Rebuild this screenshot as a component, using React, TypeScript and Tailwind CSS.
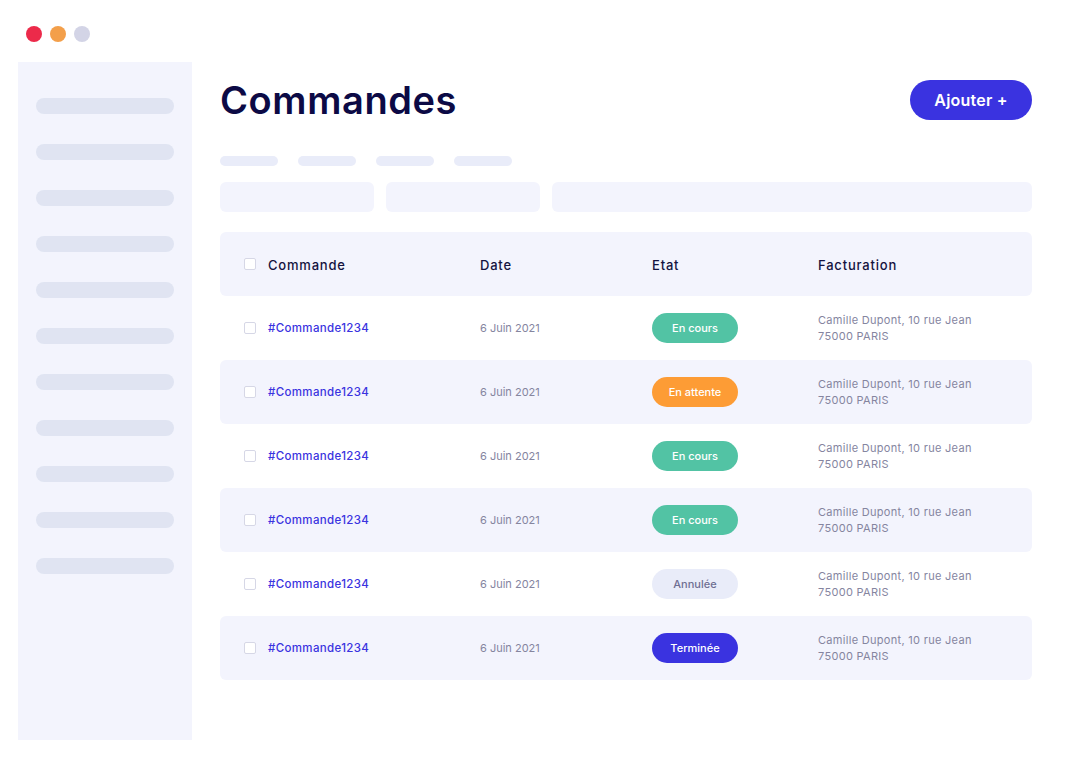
import React from "react";

const rows = [
  { state: "En cours", cls: "bg-[#52c3a4] text-white" },
  { state: "En attente", cls: "bg-[#fd9c35] text-white" },
  { state: "En cours", cls: "bg-[#52c3a4] text-white" },
  { state: "En cours", cls: "bg-[#52c3a4] text-white" },
  { state: "Annulée", cls: "bg-[#e9ecf9] text-[#6f6f93]" },
  { state: "Terminée", cls: "bg-[#3a33e0] text-white" },
];

function Check() {
  return <div className="w-3 h-3 border border-[#d6d7e6] rounded-[2px] bg-white shrink-0" />;
}

export default function App() {
  return (
    <div
      className="w-[1080px] h-[760px] bg-white relative overflow-hidden"
      style={{ fontFamily: "Inter, 'Noto Sans', sans-serif" }}
    >
      <div className="flex gap-2 pl-[26px] pt-[26px] h-[62px]">
        <div className="w-4 h-4 rounded-full bg-[#ec2a4a]" />
        <div className="w-4 h-4 rounded-full bg-[#f39f4a]" />
        <div className="w-4 h-4 rounded-full bg-[#d3d4e6]" />
      </div>
      <div className="flex pl-[18px]">
        <div className="w-[174px] h-[678px] bg-[#f3f4fd] flex flex-col gap-[30px] pt-9 px-[18px]">
          {Array.from({ length: 11 }).map((_, i) => (
            <div key={i} className="h-4 rounded-full bg-[#e0e4f2]" />
          ))}
        </div>
        <div className="w-[812px] ml-7 flex flex-col">
          <div className="flex items-center justify-between mt-[18px] h-10">
            <h1 className="text-[38px] font-semibold text-[#0c0a45] tracking-[0.6px] leading-none">Commandes</h1>
            <button className="w-[122px] h-10 rounded-full bg-[#3a33e0] text-white text-[16px] font-semibold tracking-[0.2px]">
              Ajouter +
            </button>
          </div>
          <div className="flex gap-5 mt-9">
            {[0, 1, 2, 3].map((i) => (
              <div key={i} className="w-[58px] h-[10px] rounded-full bg-[#e9ecf9]" />
            ))}
          </div>
          <div className="flex gap-3 mt-4">
            <div className="w-[154px] h-[30px] rounded-md bg-[#f3f4fd]" />
            <div className="w-[154px] h-[30px] rounded-md bg-[#f3f4fd]" />
            <div className="flex-1 h-[30px] rounded-md bg-[#f3f4fd]" />
          </div>
          <div className="mt-5 flex flex-col">
            <div className="h-16 rounded-md bg-[#f3f4fd] flex items-center text-[13px] font-medium text-[#14133f] tracking-[0.8px]">
              <div className="pl-6 w-[260px] flex items-center gap-3">
                <Check />
                <span className="pt-1">Commande</span>
              </div>
              <div className="w-[172px] pt-1">Date</div>
              <div className="w-[166px] pt-1">Etat</div>
              <div className="pt-1">Facturation</div>
            </div>
            {rows.map((r, i) => (
              <div
                key={i}
                className={`h-16 rounded-md flex items-center ${i % 2 === 1 ? "bg-[#f3f4fd]" : "bg-white"}`}
              >
                <div className="pl-6 w-[260px] flex items-center gap-3">
                  <Check />
                  <span className="text-[11.5px] font-medium text-[#3a33e0] tracking-[0.35px] pt-[2px]">#Commande1234</span>
                </div>
                <div className="w-[172px] text-[11px] text-[#85859f]">6 Juin 2021</div>
                <div className="w-[166px]">
                  <div className={`w-[86px] h-[30px] rounded-full flex items-center justify-center text-[11px] font-medium ${r.cls}`}>
                    {r.state}
                  </div>
                </div>
                <div className="text-[11px] leading-4 text-[#85859f] tracking-[0.3px]">
                  <div>Camille Dupont, 10 rue Jean</div>
                  <div>75000 PARIS</div>
                </div>
              </div>
            ))}
          </div>
        </div>
      </div>
    </div>
  );
}
